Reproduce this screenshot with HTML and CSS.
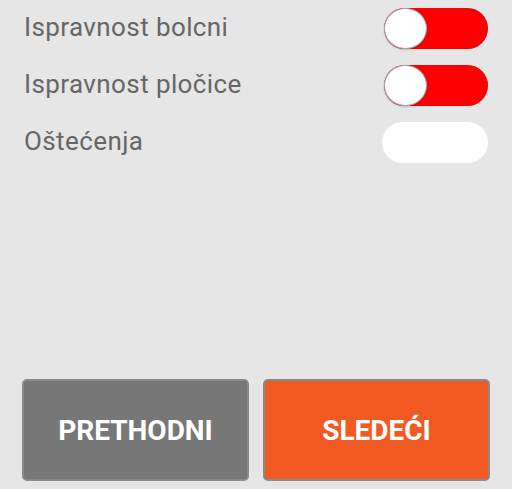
FILE: index.html
```html
<!DOCTYPE html>
<html lang="sr">

<head>
    <meta charset="UTF-8">
    <meta name="viewport" content="width=device-width, initial-scale=1.0">
    <title>Provera</title>
    <link rel="stylesheet" href="styles.css">
</head>

<body>
    <div class="check-list">
        <div class="check-row">
            <span class="check-label">Ispravnost bolcni</span>
            <div class="switch off"><div class="knob"></div></div>
        </div>
        <div class="check-row">
            <span class="check-label">Ispravnost pločice</span>
            <div class="switch off"><div class="knob"></div></div>
        </div>
        <div class="check-row">
            <span class="check-label">Oštećenja</span>
            <div class="switch empty"></div>
        </div>
    </div>

    <!-- navigation -->
    <div class="button-group">
        <button class="prev-btn">PRETHODNI</button>
        <button class="next-btn">SLEDEĆI</button>
    </div>
</body>

</html>
```

FILE: styles.css
```css
body {
    font-family: Roboto, "Noto Sans", sans-serif;
    margin: 0;
    height: 100vh;
    display: flex;
    flex-direction: column;
    background-color: #e6e6e6;
}

.check-list {
    flex: 1;
    padding: 0 24px 0 24px;
}

.check-row {
    height: 57px;
    display: flex;
    align-items: center;
    justify-content: space-between;
}

.check-label {
    font-size: 26px;
    letter-spacing: 0.4px;
    color: #666666;
    margin-top: -3px;
}

.switch {
    width: 104px;
    height: 41px;
    border-radius: 21px;
    box-sizing: border-box;
    display: flex;
    align-items: center;
}

.switch.off {
    background-color: #ff0000;
    box-shadow: inset 0 0 1px rgba(0, 0, 0, 0.35);
}

.switch.empty {
    background-color: #ffffff;
    width: 106px;
}

.knob {
    width: 43px;
    height: 41px;
    border-radius: 50%;
    background-color: #ffffff;
    border: 1.5px solid #a9a9a9;
    box-sizing: border-box;
    box-shadow: 0 1px 2px rgba(0, 0, 0, 0.2);
}

.button-group {
    display: flex;
    gap: 14px;
    padding: 0 22px 8px 22px;
}

.button-group button {
    flex: 1;
    height: 102px;
    border: 2px solid #8a8a8a;
    border-radius: 5px;
    font-family: Roboto, "Noto Sans", sans-serif;
    font-size: 28px;
    font-weight: bold;
    color: #ffffff;
    cursor: pointer;
}

.prev-btn {
    background-color: #777777;
}

.next-btn {
    background-color: #f15a22;
}
```
